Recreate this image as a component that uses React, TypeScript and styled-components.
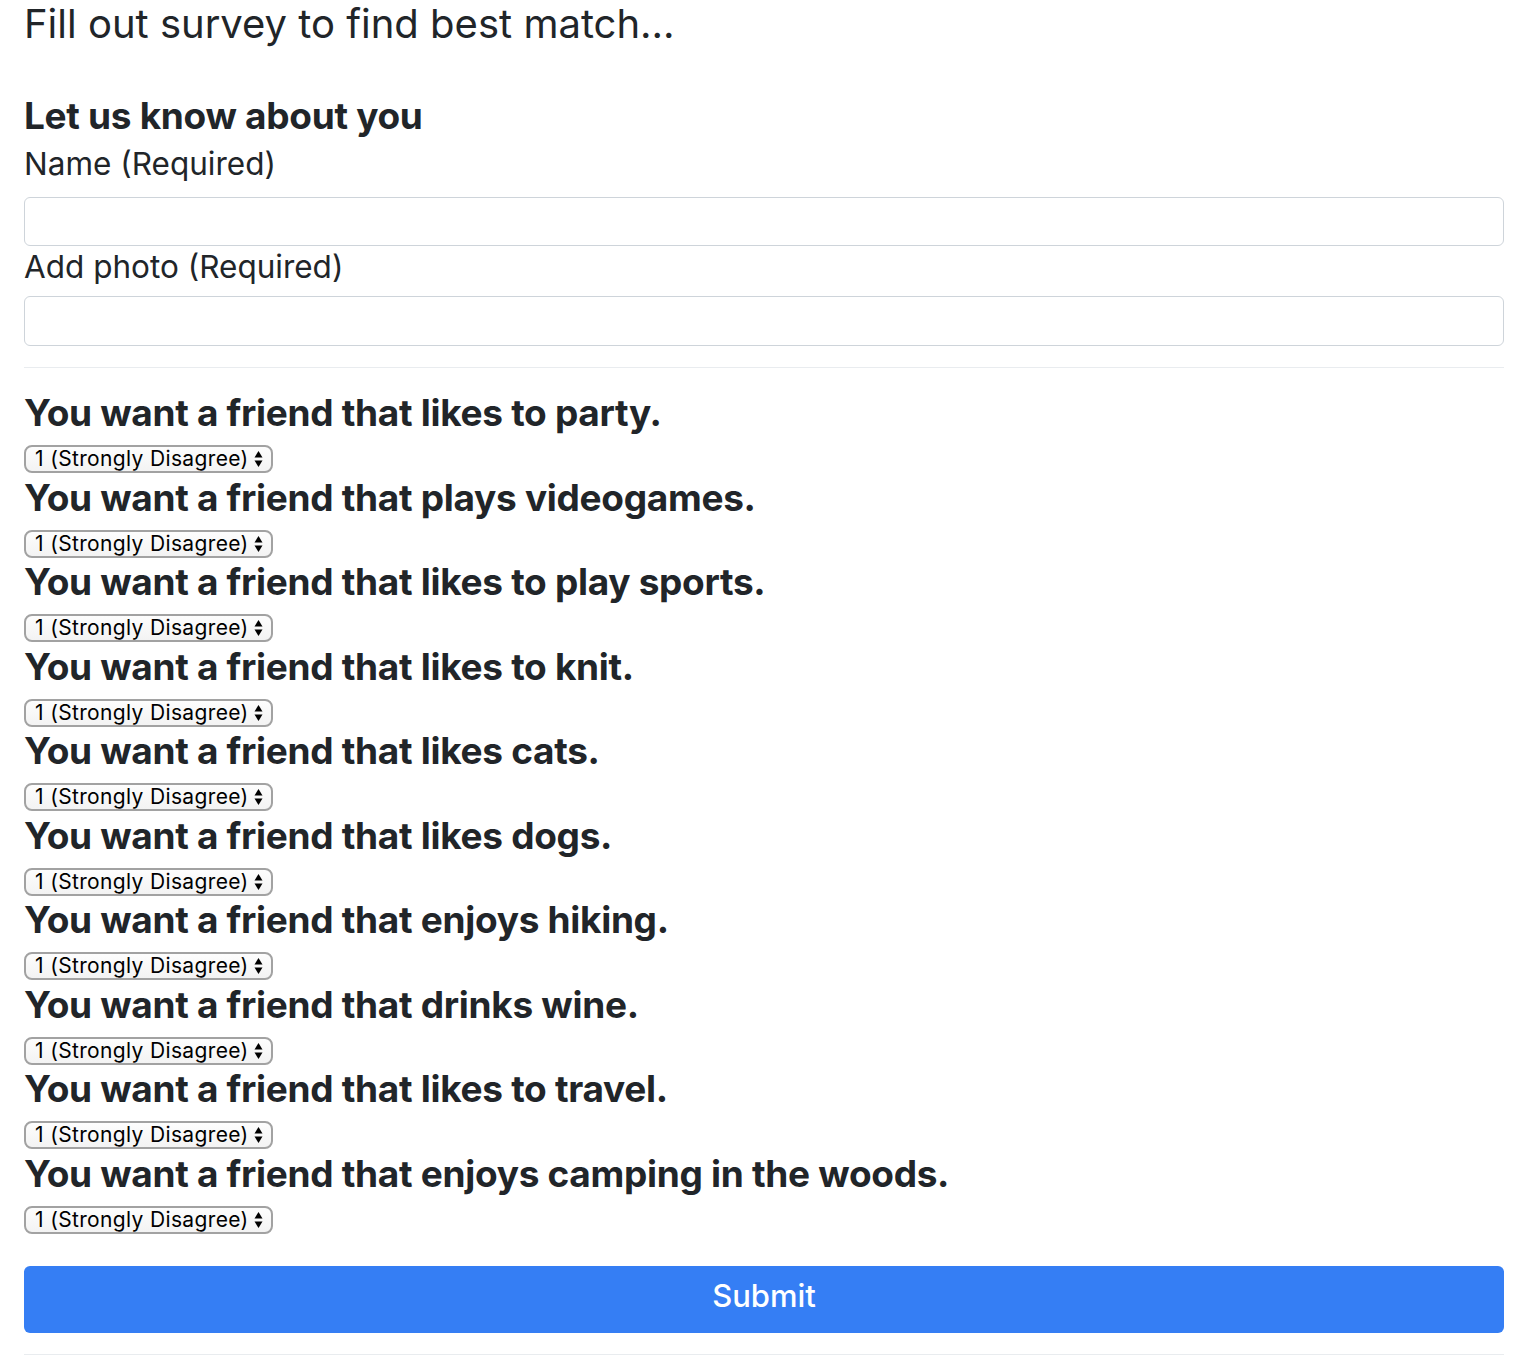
import React from 'react'
import styled, { createGlobalStyle } from 'styled-components'

const GlobalStyle = createGlobalStyle`
  html, body {
    margin: 0;
    padding: 0;
    background: #FFFFFF;
  }
  body {
    font-family: Inter, "Noto Sans", "Liberation Sans", sans-serif;
    color: #212529;
  }
`;

const Page = styled.div`
  padding: 0 28px 0 24px;
  width: 1480px;
`;

const Title = styled.h1`
  margin: 0;
  font-size: 40px;
  line-height: 48px;
  font-weight: 400;
`;

const SectionTitle = styled.h3`
  margin: 46px 0 0;
  font-size: 37px;
  line-height: 43px;
  font-weight: 700;
  letter-spacing: -0.3px;
`;

const Field = styled.div`
  display: flex;
  flex-direction: column;
`;

const FieldLabel = styled.label<{ $top: number }>`
  margin-top: ${p => p.$top}px;
  font-size: 31.5px;
  line-height: 36px;
  font-weight: 400;
`;

const TextInput = styled.input<{ $top: number; $height: number }>`
  box-sizing: border-box;
  margin-top: ${p => p.$top}px;
  width: 100%;
  height: ${p => p.$height}px;
  border: 1.5px solid #CED4DA;
  border-radius: 6px;
  background: #FFFFFF;
  padding: 0 14px;
  font: inherit;
  font-size: 24px;
`;

const Divider = styled.hr<{ $top: number }>`
  margin: ${p => p.$top}px 0 0;
  border: 0;
  border-top: 1.5px solid #E9ECEF;
`;

const Questions = styled.div`
  margin-top: 23px;
  display: flex;
  flex-direction: column;
`;

const Question = styled.div`
  display: flex;
  flex-direction: column;
  align-items: flex-start;
  height: 84.5px;
`;

const QuestionText = styled.h3`
  margin: 0;
  font-size: 37px;
  line-height: 44px;
  font-weight: 700;
  letter-spacing: -0.3px;
`;

const SelectBox = styled.div`
  box-sizing: border-box;
  margin-top: 10px;
  width: 249px;
  height: 28px;
  display: flex;
  align-items: center;
  gap: 4px;
  border: 2px solid #A2A2A2;
  border-radius: 8px;
  background: linear-gradient(#FDFDFD, #F3F3F3);
  padding: 0 8px 0 9px;
`;

const Select = styled.select`
  flex: 1;
  min-width: 0;
  appearance: none;
  border: 0;
  outline: 0;
  background: transparent;
  padding: 0;
  margin: 0;
  font-family: Inter, "Liberation Sans", sans-serif;
  font-size: 21px;
  letter-spacing: 0.35px;
  line-height: 24px;
  color: #000000;
`;

const SubmitButton = styled.button`
  box-sizing: border-box;
  margin-top: 30px;
  width: 100%;
  height: 67px;
  border: 0;
  border-radius: 6px;
  background: #357EF4;
  color: #FFFFFF;
  font-family: Inter, "Liberation Sans", sans-serif;
  font-size: 31px;
  font-weight: 500;
  padding: 0 0 9px;
`;

const Arrows = () => (
  <svg width="9" height="18" viewBox="0 0 9 18">
    <path d="M4.5 1 L8.5 7.5 L0.5 7.5 Z" fill="#000" />
    <path d="M4.5 17 L8.5 10.5 L0.5 10.5 Z" fill="#000" />
  </svg>
);

const questions = [
  'You want a friend that likes to party.',
  'You want a friend that plays videogames.',
  'You want a friend that likes to play sports.',
  'You want a friend that likes to knit.',
  'You want a friend that likes cats.',
  'You want a friend that likes dogs.',
  'You want a friend that enjoys hiking.',
  'You want a friend that drinks wine.',
  'You want a friend that likes to travel.',
  'You want a friend that enjoys camping in the woods.',
];

const options = [
  '1 (Strongly Disagree)',
  '2',
  '3',
  '4',
  '5 (Strongly Agree)',
];

const App: React.FC = () => {
  return <Page>
    <GlobalStyle />
    <Title>Fill out survey to find best match...</Title>
    <SectionTitle>Let us know about you</SectionTitle>
    <Field>
      <FieldLabel $top={9}>Name (Required)</FieldLabel>
      <TextInput $top={15} $height={49} type="text" />
      <FieldLabel $top={3}>Add photo (Required)</FieldLabel>
      <TextInput $top={11} $height={50} type="text" />
    </Field>
    <Divider $top={21} />
    <Questions>
      {questions.map(q => (
        <Question key={q}>
          <QuestionText>{q}</QuestionText>
          <SelectBox>
            <Select defaultValue={options[0]}>
              {options.map(o => <option key={o}>{o}</option>)}
            </Select>
            <Arrows />
          </SelectBox>
        </Question>
      ))}
    </Questions>
    <SubmitButton type="button">Submit</SubmitButton>
    <Divider $top={21} />
  </Page>
}

export default App
